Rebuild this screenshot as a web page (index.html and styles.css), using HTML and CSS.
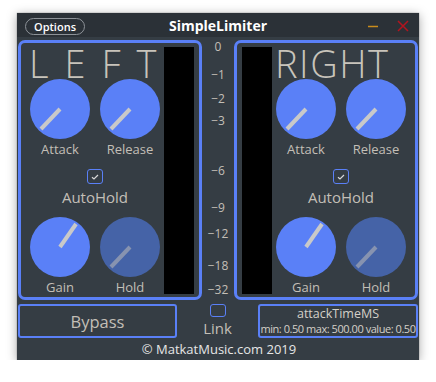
FILE: index.html
```html
<!DOCTYPE html>
<html>
<head>
<meta charset="utf-8">
<link rel="stylesheet" href="styles.css">
</head>
<body>
<div class="window">
  <div class="titlebar">
    <div class="tb-left"><button class="options">Options</button></div>
    <div class="title">SimpleLimiter</div>
    <div class="tb-right">
      <svg class="wbtn" width="12" height="12" viewBox="0 0 12 12"><line x1="1" y1="6.5" x2="11" y2="6.5" stroke="#c98d1c" stroke-width="1.5"/></svg>
      <svg class="wbtn close" width="12" height="12" viewBox="0 0 12 12"><path d="M1 1 L11 11 M11 1 L1 11" stroke="#b3141f" stroke-width="1.5"/></svg>
    </div>
  </div>

  <div class="main">
    <section class="panel panel-left">
      <div class="controls">
        <div class="chan chan-left">LEFT</div>
        <div class="knobrow">
          <div class="knob">
            <svg width="60" height="60" viewBox="0 0 60 60"><circle cx="30" cy="30" r="30" fill="#5a80f7"/><line x1="30" y1="30" x2="11" y2="50" stroke="#c9c9c9" stroke-width="4"/></svg>
            <div class="klabel">Attack</div>
          </div>
          <div class="knob">
            <svg width="60" height="60" viewBox="0 0 60 60"><circle cx="30" cy="30" r="30" fill="#5a80f7"/><line x1="30" y1="30" x2="11" y2="50" stroke="#c9c9c9" stroke-width="4"/></svg>
            <div class="klabel">Release</div>
          </div>
        </div>
        <div class="toggle">
          <span class="check"><svg width="8" height="6" viewBox="0 0 8 6"><path d="M1 3.2 L3 5 L7 1" fill="none" stroke="#d8d8d8" stroke-width="1.2"/></svg></span>
          <div class="tlabel">AutoHold</div>
        </div>
        <div class="knobrow">
          <div class="knob">
            <svg width="60" height="60" viewBox="0 0 60 60"><circle cx="30" cy="30" r="30" fill="#5a80f7"/><line x1="30" y1="30" x2="46" y2="7" stroke="#c9c9c9" stroke-width="4"/></svg>
            <div class="klabel">Gain</div>
          </div>
          <div class="knob">
            <svg width="60" height="60" viewBox="0 0 60 60"><circle cx="30" cy="30" r="30" fill="#4563a7"/><line x1="30" y1="30" x2="11" y2="50" stroke="#8793b0" stroke-width="4"/></svg>
            <div class="klabel">Hold</div>
          </div>
        </div>
      </div>
      <div class="meter"></div>
    </section>

    <div class="scale">
      <span class="tick" style="top:0px">0</span>
      <span class="tick" style="top:28px">−1</span>
      <span class="tick" style="top:52px">−2</span>
      <span class="tick" style="top:74px">−3</span>
      <span class="tick" style="top:124px">−6</span>
      <span class="tick" style="top:161px">−9</span>
      <span class="tick" style="top:187px">−12</span>
      <span class="tick" style="top:219px">−18</span>
      <span class="tick" style="top:243px">−32</span>
    </div>

    <section class="panel panel-right">
      <div class="meter"></div>
      <div class="controls">
        <div class="chan chan-right">RIGHT</div>
        <div class="knobrow">
          <div class="knob">
            <svg width="60" height="60" viewBox="0 0 60 60"><circle cx="30" cy="30" r="30" fill="#5a80f7"/><line x1="30" y1="30" x2="11" y2="50" stroke="#c9c9c9" stroke-width="4"/></svg>
            <div class="klabel">Attack</div>
          </div>
          <div class="knob">
            <svg width="60" height="60" viewBox="0 0 60 60"><circle cx="30" cy="30" r="30" fill="#5a80f7"/><line x1="30" y1="30" x2="11" y2="50" stroke="#c9c9c9" stroke-width="4"/></svg>
            <div class="klabel">Release</div>
          </div>
        </div>
        <div class="toggle">
          <span class="check"><svg width="8" height="6" viewBox="0 0 8 6"><path d="M1 3.2 L3 5 L7 1" fill="none" stroke="#d8d8d8" stroke-width="1.2"/></svg></span>
          <div class="tlabel">AutoHold</div>
        </div>
        <div class="knobrow">
          <div class="knob">
            <svg width="60" height="60" viewBox="0 0 60 60"><circle cx="30" cy="30" r="30" fill="#5a80f7"/><line x1="30" y1="30" x2="46" y2="7" stroke="#c9c9c9" stroke-width="4"/></svg>
            <div class="klabel">Gain</div>
          </div>
          <div class="knob">
            <svg width="60" height="60" viewBox="0 0 60 60"><circle cx="30" cy="30" r="30" fill="#4563a7"/><line x1="30" y1="30" x2="11" y2="50" stroke="#8793b0" stroke-width="4"/></svg>
            <div class="klabel">Hold</div>
          </div>
        </div>
      </div>
    </section>
  </div>

  <div class="bottom">
    <div class="bypass">Bypass</div>
    <div class="link">
      <span class="check empty"></span>
      <div class="linklabel">Link</div>
    </div>
    <div class="info">
      <div class="info-name">attackTimeMS</div>
      <div class="info-vals">min: 0.50 max: 500.00 value: 0.50</div>
    </div>
  </div>

  <div class="footer">© MatkatMusic.com 2019</div>
</div>
</body>
</html>
```

FILE: styles.css
```css
* { box-sizing: border-box; }
html, body { margin: 0; padding: 0; background: #ffffff; }
body {
  font-family: "Open Sans", "Noto Sans", sans-serif;
  color: #c3bfb7;
}
.window {
  margin: 13px 0 0 17px;
  width: 402px;
  height: 347px;
  background: #353d44;
  box-shadow: 0 2px 10px rgba(0,0,0,0.35), 0 0 1px rgba(0,0,0,0.5);
}
.titlebar {
  height: 24px;
  background: #2b3137;
  display: grid;
  grid-template-columns: 1fr auto 1fr;
  align-items: center;
}
.tb-left { padding-left: 8px; display: flex; align-items: center; padding-top: 3px; }
.options {
  width: 60px;
  height: 17px;
  border: 1px solid #8d9298;
  border-radius: 9px;
  background: transparent;
  color: #ffffff;
  font-family: "Open Sans", sans-serif;
  font-size: 11px;
  font-weight: 600;
  padding: 0;
  line-height: 15px;
}
.title {
  color: #ffffff;
  font-weight: 700;
  font-size: 14px;
  padding-top: 1px;
}
.tb-right {
  display: flex;
  justify-content: flex-end;
  align-items: center;
  gap: 18px;
  padding-right: 10px;
  padding-top: 2px;
}
.main {
  display: flex;
  padding: 3px 1px 0 1px;
}
.panel {
  width: 184px;
  height: 260px;
  border: 3px solid #5a80f7;
  border-radius: 7px;
  display: flex;
}
.meter {
  width: 30px;
  height: 247px;
  margin-top: 4px;
  background: #000000;
}
.panel-left .meter { margin-left: 0; }
.panel-right .meter { margin-left: 5px; }
.controls {
  width: 143px;
  display: flex;
  flex-direction: column;
}
.panel-left .controls { padding-left: 9px; padding-right: 4px; }
.panel-right .controls { padding-left: 4px; padding-right: 9px; }
.chan {
  height: 36px;
  font-family: "Open Sans", sans-serif;
  font-weight: 300;
  font-size: 38px;
  line-height: 36px;
  color: #c8c4bb;
  white-space: nowrap;
  padding-top: 2px;
}
.chan-left { letter-spacing: 16px; margin-left: -1px; }
.chan-right { letter-spacing: 1.5px; margin-left: -1px; }
.knobrow {
  display: flex;
  gap: 10px;
}
.knob {
  width: 60px;
  display: flex;
  flex-direction: column;
  align-items: center;
}
.knob svg { display: block; }
.klabel {
  height: 20px;
  font-size: 13px;
  line-height: 20px;
}
.toggle {
  display: flex;
  flex-direction: column;
  align-items: center;
  padding-top: 10px;
  height: 58px;
  margin-left: 0;
}
.check {
  width: 16px;
  height: 15px;
  border: 1.5px solid #5a80f7;
  border-radius: 3px;
  display: flex;
  align-items: center;
  justify-content: center;
}
.tlabel {
  margin-top: 3px;
  font-size: 15px;
  line-height: 20px;
}
.scale {
  width: 32px;
  position: relative;
}
.tick {
  position: absolute;
  left: 0;
  right: 0;
  text-align: center;
  font-size: 12px;
  line-height: 14px;
  color: #c3bfb7;
}
.bottom {
  display: flex;
  padding: 4px 1px 0 1px;
  height: 38px;
}
.bypass {
  width: 159px;
  height: 34px;
  border: 2px solid #5a80f7;
  border-radius: 3px;
  display: flex;
  align-items: center;
  justify-content: center;
  font-size: 16.5px;
  color: #c3bfb7;
}
.link {
  width: 81px;
  display: flex;
  flex-direction: column;
  align-items: center;
}
.linklabel {
  font-size: 15px;
  line-height: 20px;
  margin-top: 1px;
}
.info {
  width: 160px;
  height: 34px;
  border: 2px solid #5a80f7;
  border-radius: 3px;
  display: flex;
  flex-direction: column;
  align-items: center;
  justify-content: center;
  color: #d4d0c8;
}
.info-name { font-size: 12.5px; line-height: 15px; }
.info-vals { font-size: 11px; line-height: 15px; white-space: nowrap; letter-spacing: -0.45px; }
.footer {
  text-align: center;
  font-size: 13px;
  line-height: 22px;
  color: #e6e6e6;
  padding-left: 2px;
}
```
